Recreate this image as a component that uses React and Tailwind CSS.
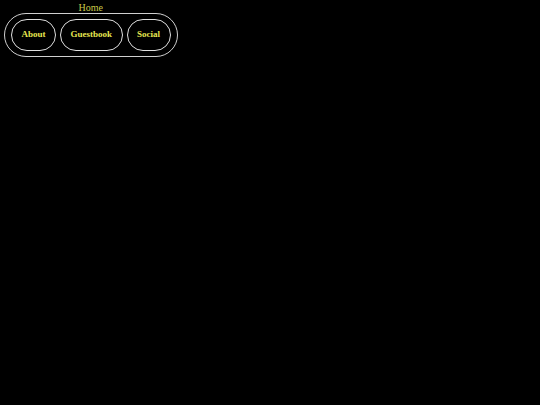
export default function App() {
  const links = ['About', 'Guestbook', 'Social']
  return (
    <div className="flex min-h-[405px] w-full items-start bg-black" style={{ fontFamily: '"Liberation Serif", "Times New Roman", serif' }}>
      <div className="flex flex-col items-center pl-1 pt-[3px]">
        <a className="text-[10px] leading-[10px] text-[#c8c848]">Home</a>
        <nav className="flex items-center gap-[4px] rounded-full border border-[#d0d0d0] px-[6px] py-[5px]">
          {links.map(l => (
            <button
              key={l}
              className="h-[32px] rounded-full border border-[#e0e0e0] px-[9.5px] text-[9px] font-bold text-[#e6e650]"
            >
              {l}
            </button>
          ))}
        </nav>
      </div>
    </div>
  )
}
